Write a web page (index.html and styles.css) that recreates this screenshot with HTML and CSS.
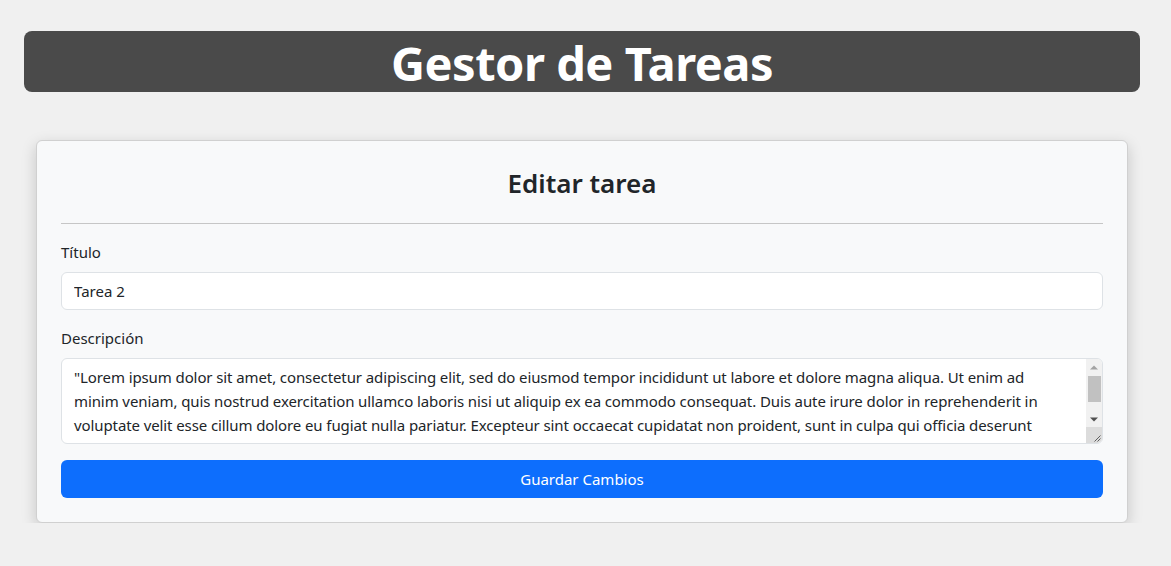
FILE: index.html
```html
<!DOCTYPE html>
<html lang="es">
<head>
<meta charset="utf-8">
<title>Gestor de Tareas</title>
<link rel="stylesheet" href="styles.css">
</head>
<body>
<header class="app-header">
  <h1 class="app-title">Gestor de Tareas</h1>
</header>
<main class="card">
  <h2 class="card-title">Editar tarea</h2>
  <hr class="divider">
  <form class="form">
    <div class="field">
      <label class="label" for="titulo">Título</label>
      <input class="control" id="titulo" type="text" value="Tarea 2">
    </div>
    <div class="field">
      <label class="label" for="descripcion">Descripción</label>
      <div class="textarea-wrap">
        <textarea class="control textarea" id="descripcion" rows="3">"Lorem ipsum dolor sit amet, consectetur adipiscing elit, sed do eiusmod tempor incididunt ut labore et dolore magna aliqua. Ut enim ad minim veniam, quis nostrud exercitation ullamco laboris nisi ut aliquip ex ea commodo consequat. Duis aute irure dolor in reprehenderit in voluptate velit esse cillum dolore eu fugiat nulla pariatur. Excepteur sint occaecat cupidatat non proident, sunt in culpa qui officia deserunt mollit anim id est laborum."</textarea>
        <div class="fake-scroll" aria-hidden="true">
          <div class="sb-btn">
            <svg width="8" height="5" viewBox="0 0 8 5"><polygon points="0,4.5 8,4.5 4,0.5" fill="#a3a3a3"/></svg>
          </div>
          <div class="sb-track"><div class="sb-thumb"></div></div>
          <div class="sb-btn">
            <svg width="8" height="5" viewBox="0 0 8 5"><polygon points="0,0.5 8,0.5 4,4.5" fill="#505050"/></svg>
          </div>
          <div class="sb-corner">
            <svg width="16" height="16" viewBox="0 0 16 16"><path d="M14.5 8.5 L8.5 14.5 M14.5 11.5 L11.5 14.5" stroke="#606060" stroke-width="1"/></svg>
          </div>
        </div>
      </div>
    </div>
    <button class="btn" type="button">Guardar Cambios</button>
  </form>
</main>
</body>
</html>
```
FILE: styles.css
```css
* { box-sizing: border-box; }
html, body { margin: 0; padding: 0; }
body {
  background: #f0f0f0;
  font-family: "Noto Sans", "Open Sans", sans-serif;
  color: #212529;
  font-size: 16px;
  line-height: 1.5;
  padding-top: 31px;
}
.app-header {
  margin: 0 31px 0 24px;
  height: 61px;
  background: #4a4a4a;
  border-radius: 8px;
  display: flex;
  align-items: center;
  justify-content: center;
}
.app-title {
  margin: 0;
  color: #fff;
  font-size: 47px;
  font-weight: 700;
  line-height: 1;
  letter-spacing: -0.5px;
  transform: translateY(2px);
}
.card {
  margin: 48px 43px 0 36px;
  background: #f8f9fa;
  border: 1px solid #d0d0d0;
  border-radius: 6px;
  box-shadow: 0 5px 15px rgba(0,0,0,0.18);
  padding: 24px;
}
.card-title {
  margin: 0;
  text-align: center;
  font-size: 26px;
  font-weight: 600;
  line-height: 36px;
  height: 42px;
}
.divider {
  margin: 16px 0;
  border: 0;
  border-top: 1px solid #c6c6c6;
}
.field { margin-bottom: 16px; }
.label {
  display: block;
  margin-bottom: 8px;
  font-size: 15px;
  line-height: 24px;
}
.control {
  display: block;
  width: 100%;
  height: 38px;
  padding: 6px 12px;
  font-family: inherit;
  font-size: 15px;
  line-height: 24px;
  color: #212529;
  background: #fff;
  border: 1px solid #dee2e6;
  border-radius: 6px;
  outline: none;
}
.textarea-wrap {
  position: relative;
}
.textarea {
  height: 86px;
  resize: none;
  overflow: hidden;
  padding-right: 32px;
  letter-spacing: -0.1px;
}
.fake-scroll {
  position: absolute;
  top: 1px;
  right: 1px;
  bottom: 1px;
  width: 16px;
  display: flex;
  flex-direction: column;
  background: #f1f1f1;
  border-top-right-radius: 5px;
  border-bottom-right-radius: 5px;
  overflow: hidden;
}
.sb-btn {
  height: 16px;
  flex: none;
  display: flex;
  align-items: center;
  justify-content: center;
}
.sb-track {
  flex: 1;
  padding: 1px 1px 0 2px;
}
.sb-thumb {
  height: 26px;
  background: #c1c1c1;
}
.sb-corner {
  height: 16px;
  flex: none;
  background: #dcdcdc;
}
.sb-corner svg { display: block; }
.btn {
  display: block;
  width: 100%;
  height: 38px;
  background: #0d6efd;
  color: #fff;
  border: 0;
  border-radius: 6px;
  font-family: inherit;
  font-size: 15px;
  line-height: 24px;
}
```
